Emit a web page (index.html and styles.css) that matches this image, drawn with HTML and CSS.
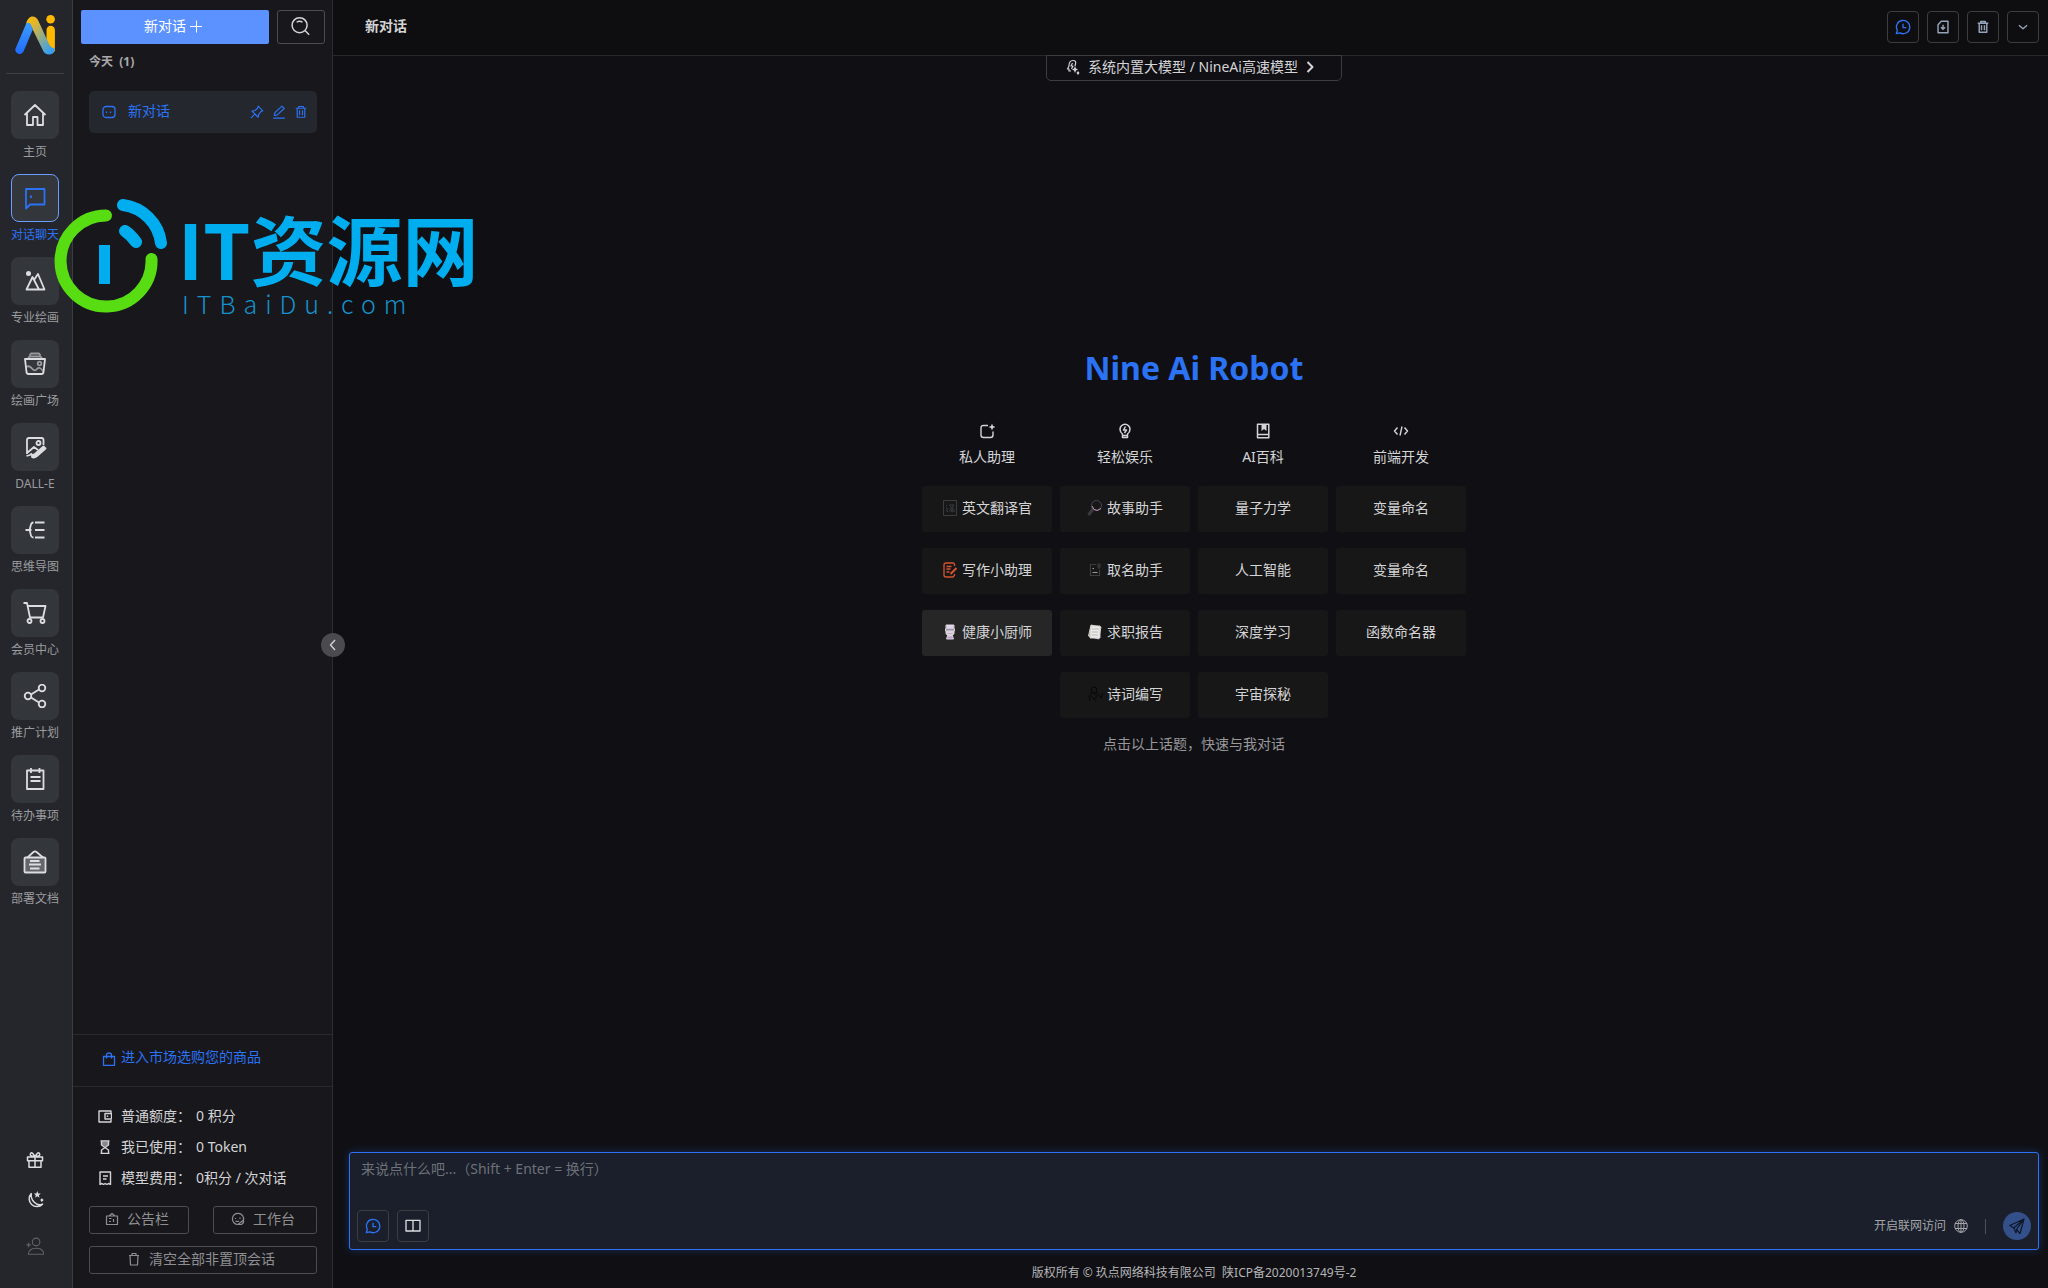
FILE: index.html
```html
<!DOCTYPE html>
<html lang="zh-CN">
<head>
<meta charset="utf-8">
<meta name="viewport" content="width=device-width, initial-scale=1">
<title>Nine Ai Robot</title>
<link rel="stylesheet" href="styles.css">
</head>
<body>
<svg class="sprite" aria-hidden="true">
  <symbol id="i-trash" viewBox="0 0 24 24"><path d="M3 5.500h18M8 5V2.500h8V5M5.500 5.500V21h13V5.500M9.500 9v8.500M14.500 9v8.500"/></symbol>
  <symbol id="i-chatclock" viewBox="0 0 24 24"><path d="M2 22l1.500-5A10 10 0 1 1 7.500 20.900zM12 7v6h5"/></symbol>
</svg>
<div class="app">
  <nav class="rail" aria-label="主导航">
    <svg class="logo" viewBox="0 0 40 40">
      <defs>
        <linearGradient id="lg1" x1="0" y1="0" x2="0" y2="1"><stop offset="0" stop-color="#3d9dfb"/><stop offset="1" stop-color="#1f6bff"/></linearGradient>
        <linearGradient id="lg2" x1="0" y1="0" x2=".8" y2="1"><stop offset="0" stop-color="#ffb703"/><stop offset=".25" stop-color="#e5b62a"/><stop offset="1" stop-color="#2f9ffc"/></linearGradient>
      </defs>
      <path d="M31.500 15a4.200 4.200 0 0 1 8.400 0v21l-3 3-5.400-8z" fill="#ffb900"/>
      <circle cx="35.600" cy="4.300" r="4.300" fill="#ffb900"/>
      <path d="M11 9c1-5 4-7.600 6.500-7.600S22 3 23 5l11 24c1 2.500 3 4 6 4.500C39 38 36.500 39.500 34 39.500s-5-1.500-6-4L16 11c-1-2.500-3-3-5-2z" fill="url(#lg2)"/>
      <path d="M11 9c1.500-2 4-1.500 5 1l2 4-9.500 22.500A4.300 4.300 0 0 1 .4 34z" fill="url(#lg1)"/>
    </svg>
    <hr class="rail-line">
    <div class="rail-list">
      <a class="rail-item" href="#home"><span class="tile"><svg viewBox="0 0 24 24"><path d="M1.500 12L12 2l10.500 10M4 10v12h6v-8h4.500v8H20V10"/></svg></span>主页</a>
      <a class="rail-item active" href="#chat" aria-current="page"><span class="tile"><svg viewBox="0 0 24 24"><path d="M3 22.500V3h18.500v15.500H7zM8 9.500v2.500"/></svg></span>对话聊天</a>
      <a class="rail-item" href="#draw"><span class="tile"><svg viewBox="0 0 24 24"><path d="M3.500 20.500l6-12.500 6.500 12.500zM11 11l4-6 6.500 15.500H16"/><circle cx="5.500" cy="4.500" r="2.500" fill="currentColor" stroke="none"/></svg></span>专业绘画</a>
      <a class="rail-item" href="#gallery"><span class="tile"><svg viewBox="0 0 24 24"><path d="M2 7h20l-1.500 13q-.3 2-2 2h-13q-1.700 0-2-2z"/><g opacity=".6"><path d="M5 6.500L6.500 4.500h11L19 6.500M6.500 3.500L8 1.500h8l1.500 2M3 15q3.500-2 6 1.500t5 .5 6 2"/><circle cx="16.500" cy="11.500" r="1.800"/></g></svg></span>绘画广场</a>
      <a class="rail-item" href="#dalle"><span class="tile"><svg viewBox="0 0 24 24"><path d="M20.500 10V5q0-2-2-2H6Q4 3 4 5v14M4 18l7-6 4 3M3.500 21l3.500-1 2-1.500"/><circle cx="15.500" cy="8" r="2"/><path d="M9 20l3-1 8.500-7.500 2 2L14 21q-3 2.500-5 1z" fill="currentColor"/></svg></span>DALL-E</a>
      <a class="rail-item" href="#mind"><span class="tile"><svg viewBox="0 0 24 24"><path d="M2.500 12h6M10.500 4.500Q8 4.500 7.500 8.500L6.500 12l1 3.500q.5 4 3 4M12 4.500h9.500M12 12h9.500M12 19.500h9.500"/></svg></span>思维导图</a>
      <a class="rail-item" href="#member"><span class="tile"><svg viewBox="0 0 24 24"><path d="M.5 2h3.500l3 14.500h13L22.500 5H5"/><circle cx="6.500" cy="20" r="2"/><circle cx="19.500" cy="20" r="2"/></svg></span>会员中心</a>
      <a class="rail-item" href="#promo"><span class="tile"><svg viewBox="0 0 24 24"><circle cx="5" cy="12" r="3.300"/><circle cx="19" cy="4" r="3.300"/><circle cx="19" cy="20" r="3.300"/><path d="M8 10.500l8-5M8 13.500l8 5"/></svg></span>推广计划</a>
      <a class="rail-item" href="#todo"><span class="tile"><svg viewBox="0 0 24 24"><path d="M4 3.500h16.500V22H4zM8 1v5M16.500 1v5M7.500 10h10M7.500 14h10"/></svg></span>待办事项</a>
      <a class="rail-item" href="#docs"><span class="tile"><svg viewBox="0 0 24 24"><path d="M4.500 7.500L10.500 2q1.500-1.200 3 0l6.500 5.500"/><rect x="1.500" y="7.500" width="21" height="15" rx="1" fill="#63666c"/><path d="M7 11h9.500M6 14.500h12M7 18.500h9.500"/></svg></span>部署文档</a>
    </div>
    <div class="rail-tools">
      <button aria-label="礼物"><svg viewBox="0 0 24 24" stroke-width="2"><path d="M2 8h20v5H2zM4 13v8.500h16V13M12 8v13.500M12 7.500Q4 7 6 3.500T12 7.500Q20 7 18 3.500T12 7.500"/></svg></button>
      <button aria-label="深色模式"><svg viewBox="0 0 24 24" stroke-width="2"><path d="M7 3.500A10 10 0 1 0 22 17.500Q16 20 11 15T7 3.500z"/><path d="M15 0l1.300 3.200 3.400.2-2.600 2.200.9 3.300-3-1.800-2.800 1.800.8-3.300-2.500-2.200 3.300-.2zM21 9.500l2.500 2.500-2.500 2.500-2-2.500z" fill="currentColor" stroke="none"/></svg></button>
      <button class="dim" aria-label="账户"><svg viewBox="0 0 24 24" stroke-width="1.500"><circle cx="13.500" cy="6.500" r="5"/><path d="M3 23q1-8 10.500-8T24 23zM.5 10.500h6M3.500 7.500v6"/></svg></button>
    </div>
  </nav>

  <aside class="side">
    <div class="side-top">
      <button class="new-chat">新对话<svg viewBox="0 0 14 14" stroke-width="1"><path d="M1 7.500h12M7.500 1.500v12"/></svg></button>
      <button class="search" aria-label="搜索"><svg viewBox="0 0 24 24"><circle cx="11.500" cy="11" r="9"/><path d="M18 17.500l5 5M8 7.500q3.500-2.500 7 0"/></svg></button>
    </div>
    <div class="history">
      <h2>今天&nbsp; (1)</h2>
      <div class="chat-row">
        <svg viewBox="0 0 14 14" stroke-width="1.300"><rect x="1" y="1.500" width="12" height="11" rx="3"/><path d="M4.500 6.500v1.500M8.500 6.500v1.500"/></svg>
        <a href="#c1">新对话</a>
        <button aria-label="置顶"><svg viewBox="0 0 24 24" stroke-width="2"><path d="M14 2l8 8-3 1-4 5-1 5L3.500 10.500l5-1 4.500-4zM8 16l-6.500 6.500"/></svg></button>
        <button aria-label="编辑"><svg viewBox="0 0 24 24" stroke-width="2"><path d="M4 18l1-5L17 2l4 4L9 17zM2 22.500h20"/></svg></button>
        <button aria-label="删除"><svg viewBox="0 0 24 24" stroke-width="2"><use href="#i-trash"/></svg></button>
      </div>
    </div>
    <a class="market" href="#market"><svg viewBox="0 0 14 14" stroke-width="1.300"><path d="M1.500 4.500h11v9h-11zM4.500 6.500V3q0-2 2.500-2t2.500 2v3.500"/></svg>进入市场选购您的商品</a>
    <div class="account">
      <dl>
        <div><svg viewBox="0 0 14 14" stroke-width="1.400"><path d="M13 4V2H1v11h12v-2M7 4.500h6.500v5.500H7zM9.500 6.500v1.500"/></svg><dt>普通额度：</dt><dd>0 积分</dd></div>
        <div><svg viewBox="0 0 14 14" stroke-width="1.400"><path d="M2.500 1h9M2.500 13.500h9M3.500 1.500V5L7 7.500 10.500 5V1.500M3.500 13v-3L7 7.500l3.500 2.500v3"/><path d="M4 2h6v3L7 6.500 4 5z" fill="currentColor" opacity=".6" stroke="none"/></svg><dt>我已使用：</dt><dd>0 Token</dd></div>
        <div><svg viewBox="0 0 14 14" stroke-width="1.400"><path d="M2 1h10.500v12.500l-2-1-1.700 1-1.600-1-1.700 1-1.500-1-2 1zM5 5h5M5 8h3.500"/></svg><dt>模型费用：</dt><dd>0积分 / 次对话</dd></div>
      </dl>
      <div class="pair">
        <button><svg viewBox="0 0 14 14" stroke-width="1.200"><path d="M1.500 4h11v8.500h-11zM4 4l3-2.500L10 4M4 6.500h2.500M8.500 7v3M4 9.500h2"/></svg>公告栏</button>
        <button><svg viewBox="0 0 14 14" stroke-width="1.200"><path d="M12.500 8A5.600 5.600 0 1 0 7 12.500M4.500 6v1M9 5.500v1.500M4.500 9q2 1 3.500 0M7 12.500l5.500-4.500v2.500l-2 2z"/></svg>工作台</button>
      </div>
      <button><svg viewBox="0 0 14 14" stroke-width="1.200"><path d="M2 3.500h10M5 3.500v-2h4v2M3 3.500l.5 9.500h7l.5-9.500"/></svg>清空全部非置顶会话</button>
    </div>
    <button class="collapse" aria-label="收起"><svg viewBox="0 0 14 14" stroke-width="1.400"><path d="M9 2L4.500 7 9 12"/></svg></button>
  </aside>

  <main class="main">
    <header class="top">
      <h1>新对话</h1>
      <button class="box blue" aria-label="上下文"><svg viewBox="0 0 24 24" stroke-width="2"><use href="#i-chatclock"/></svg></button>
      <button class="box small" aria-label="导出"><svg viewBox="0 0 24 24" stroke-width="2.500"><path d="M9 2h11.500v20H3.500V8zM12 8v7M8.500 12.500l3.500 3.500 3.500-3.500"/></svg></button>
      <button class="box small" aria-label="清空"><svg viewBox="0 0 24 24" stroke-width="2.500"><use href="#i-trash"/></svg></button>
      <button class="box small" aria-label="更多"><svg viewBox="0 0 24 24" stroke-width="2.500"><path d="M5 9l7 6 7-6"/></svg></button>
    </header>
    <div class="content">
      <button class="model"><svg viewBox="0 0 14 16" stroke-width="1.200"><path d="M5 12H3v-2H1.500L3 7q0-5.500 4-5.500 3.500 0 2.500 3.500L9 7M6.500 4L5 7h2L5.500 10"/><path d="M9 7l1 2.500 2 1-2 1L9 14l-1-2.500-2-1 2-1zM12 12l1.500 2L12 16l-1.500-2z" fill="currentColor" stroke="none"/></svg>系统内置大模型 / NineAi高速模型<svg viewBox="0 0 14 16" stroke-width="2"><path d="M4.500 3l5 5-5 5"/></svg></button>

      <section class="hero">
        <h2>Nine Ai Robot</h2>
        <div class="topics">
          <div class="topic">
            <h3><svg viewBox="0 0 16 16" stroke-width="1.400"><path d="M9 2.500H4.500Q2 2.500 2 5v7q0 2.500 2.500 2.500h7Q14 14.500 14 12V8.500"/><path d="M13 .5l1 2.500 2.500 1-2.500 1-1 2.500-1-2.500-2.500-1 2.500-1z" fill="currentColor" stroke="none"/></svg>私人助理</h3>
            <button><svg class="g-tr" viewBox="0 0 16 16" stroke-width="1"><path d="M1.500.5h13v15h-13zM4 5l1 1M4 8h1v4l1-1M7 5h5l-2 3-2-2M7.500 9h5M10 7.500v5M7 11h6"/></svg>英文翻译官</button>
            <button><svg class="g-wr" viewBox="0 0 16 16" stroke-width="1.300"><path d="M12.500 4V2.500Q12.500 1 11 1H4Q2 1 2 3v10q0 2 2 2h7l1.500-1.500V12M4.500 4.500h5M4.500 7h4M4.500 10h3"/><path d="M14.500 6L8.500 12" stroke-width="2"/></svg>写作小助理</button>
            <button class="hover"><svg viewBox="0 0 16 16" stroke="none"><path d="M4 1h8v4H4z" fill="#bfa3cf"/><path d="M6 1v3M8 1v3M10 1v3" stroke="#fff"/><path d="M3.500 5h9v2h-9z" fill="#5f5678"/><path d="M4 7h8v2.500L10 12H6L4 9.500z" fill="#e9d3e5"/><path d="M5 9h6v1H5z" fill="#7a4f86"/><path d="M5.500 12h5l1 3h-7z" fill="#c79bd8"/></svg>健康小厨师</button>
          </div>
          <div class="topic">
            <h3><svg viewBox="0 0 16 16" stroke-width="1.500"><path d="M5.500 11Q3 9 3 6.200a5 5 0 0 1 10 0Q13 9 10.500 11v3.500h-5zM5.500 12.500h5M8.500 3.500L6.500 7h3L7.500 10"/></svg>轻松娱乐</h3>
            <button><svg viewBox="0 0 16 16"><path d="M6 9l-4.500 6" stroke="#3d3942" stroke-width="3"/><circle cx="9.500" cy="5.500" r="5" stroke="#4b4453"/><path d="M5 6q1 4 5 4.500l4-2" stroke="#b79cb4"/></svg>故事助手</button>
            <button><svg class="g-tr" viewBox="0 0 16 16" stroke-width="1.200"><path d="M9 2.500H3.500v11h9V8M11 2h2v3h-2zM12 5v2"/><path d="M5.500 6.500H7M5.500 10.500h5" stroke="#999"/></svg>取名助手</button>
            <button><svg viewBox="0 0 16 16" stroke="none"><path d="M4 1l10 2-2.500 12L1.500 12z" fill="#aeb46c"/><path d="M4 2h9v12H3z" fill="#ece9e6"/><path d="M5 5h7M5 8h6M4.500 11H11" stroke="#bbb"/></svg>求职报告</button>
            <button><svg class="g-po" viewBox="0 0 16 16" stroke-width="1"><circle cx="7" cy="4" r="3"/><path d="M5 7l-3 3 1 5M7 7l3 3-3 4M9 6l5 6 2-5M4 10l5 5"/></svg>诗词编写</button>
          </div>
          <div class="topic">
            <h3><svg viewBox="0 0 16 16" stroke-width="1.500"><path d="M2.500 1.200h11.300v13.600H2.500zM3 11.500h10.500"/><path d="M6.500 1h5v7L9 6 6.500 8z" fill="currentColor" stroke="none"/></svg>AI百科</h3>
            <button>量子力学</button>
            <button>人工智能</button>
            <button>深度学习</button>
            <button>宇宙探秘</button>
          </div>
          <div class="topic">
            <h3><svg viewBox="0 0 16 16" stroke-width="1.400"><path d="M4.500 4.500L1.500 8l3 3.500M11.500 4.500l3 3.500-3 3.500M9 3.500L7 12.500"/></svg>前端开发</h3>
            <button>变量命名</button>
            <button>变量命名</button>
            <button>函数命名器</button>
          </div>
        </div>
        <p>点击以上话题，快速与我对话</p>
      </section>

      <form class="composer">
        <textarea aria-label="消息" placeholder="来说点什么吧...（Shift + Enter = 换行）"></textarea>
        <div class="bar">
          <button type="button" class="box blue" aria-label="上下文"><svg viewBox="0 0 24 24" stroke-width="2"><use href="#i-chatclock"/></svg></button>
          <button type="button" class="box light" aria-label="提示词"><svg viewBox="0 0 24 24" stroke-width="2"><path d="M1.500 3.500h21v16h-21zM12 3.500v17"/></svg></button>
          <button type="button" class="web">开启联网访问<svg viewBox="0 0 14 14" stroke-width="1"><circle cx="7" cy="7" r="6.300"/><ellipse cx="7" cy="7" rx="3" ry="6.300"/><path d="M1 4.500h12M1 9.500h12M7 1v12"/></svg></button>
          <span class="sep"></span>
          <button class="send" aria-label="发送"><svg viewBox="0 0 16 16" stroke-width="1.200"><path d="M15 1L.8 7.500l4 2.500L15 1l-4 14.500-3.500-4M4.800 10L15 1 7.500 11.500 7 15 4.800 10"/></svg></button>
        </div>
      </form>
      <footer>版权所有 © 玖点网络科技有限公司&nbsp; <a href="#icp">陕ICP备2020013749号-2</a></footer>
    </div>
  </main>

  <div class="watermark">
    <svg viewBox="0 0 118 118" stroke-width="12">
      <path d="M54 18.500A45.500 45.500 0 1 0 99.500 62" stroke="#58dd13"/>
      <path d="M71 8A44 44 0 0 1 109 46M73 34Q79 38 84 45" stroke="#00adee"/>
      <path d="M47 48h11v39H47z" fill="#00adee" stroke="none"/>
    </svg>
    <div class="wm-text"><strong>IT资源网</strong><span>ITBaiDu.com</span></div>
  </div>
</div>
</body>
</html>
```
FILE: styles.css
```css
* { box-sizing: border-box; }
body {
  margin: 0;
  background: #101014;
  color: #d4d4d6;
  font: 14px/20px "Noto Sans", "Noto Sans CJK SC", sans-serif;
}
h1, h2, h3, p, dl, dd { margin: 0; }
button {
  padding: 0;
  border: 0;
  background: none;
  color: inherit;
  font: inherit;
  cursor: pointer;
}
a { color: inherit; text-decoration: none; }
svg {
  flex: none;
  fill: none;
  stroke: currentColor;
  stroke-linejoin: round;
}
.sprite { display: none; }

.app {
  position: relative;
  display: flex;
  height: 100vh;
}

/* icon rail */
.rail {
  flex: none;
  display: flex;
  flex-direction: column;
  align-items: center;
  width: 73px;
  padding: 15px 2px 0 0;
  background: #25262b;
  border-right: 1px solid #3c3c40;
}
.logo { width: 40px; height: 40px; stroke: none; }
.rail-line {
  width: 58px;
  margin: 18px 0 17px;
  border: 0;
  border-top: 1px solid #3f4044;
}
.rail-list {
  display: flex;
  flex-direction: column;
  gap: 11px;
}
.rail-item {
  display: flex;
  flex-direction: column;
  align-items: center;
  gap: 2px;
  color: #9b9c9f;
  font-size: 12px;
  line-height: 22px;
  white-space: nowrap;
}
.tile {
  display: grid;
  place-items: center;
  width: 48px;
  height: 48px;
  border: 1px solid transparent;
  border-radius: 8px;
  background: #33363b;
  color: #dcdde0;
}
.tile svg { width: 24px; height: 24px; stroke-width: 1.8; }
.active { color: #2b72f5; }
.active .tile { border-color: #6b9dff; color: #2b72f5; }
.rail-tools {
  display: flex;
  flex-direction: column;
  gap: 22px;
  margin: auto 0 33px;
}
.rail-tools button { display: block; height: 18px; color: #dcdde0; }
.rail-tools svg { display: block; width: 18px; height: 18px; }
.rail-tools .dim { margin-top: 6px; color: #616266; }

/* conversations */
.side {
  position: relative;
  flex: none;
  display: flex;
  flex-direction: column;
  width: 260px;
  background: #18181c;
  border-right: 1px solid #2d2d30;
}
.side-top { display: flex; gap: 8px; padding: 10px 7px 7px 8px; }
.new-chat {
  flex: 1;
  display: flex;
  align-items: center;
  justify-content: center;
  gap: 3px;
  height: 34px;
  padding: 0 3px 2px 0;
  border-radius: 2px;
  background: #5b92ff;
  color: #fff;
}
.new-chat svg { width: 14px; height: 14px; }
.search {
  display: grid;
  place-items: center;
  width: 48px;
  padding: 0 2px 2px 0;
  border: 1px solid #4d4d50;
  border-radius: 3px;
}
.search svg { width: 20px; height: 20px; stroke-width: 1.8; }
.history { flex: 1; padding: 0 15px 0 16px; }
.history h2 { color: #a9a9ac; font-size: 12px; line-height: 22px; }
.chat-row {
  display: flex;
  align-items: center;
  gap: 8px;
  height: 42px;
  margin-top: 18px;
  padding: 0 9px 0 13px;
  border-radius: 5px;
  background: #24272e;
  color: #2b72f5;
}
.chat-row > svg { width: 14px; height: 14px; }
.chat-row a { flex: 1; margin-left: 4px; padding-bottom: 2px; }
.chat-row button { height: 14px; }
.chat-row button svg { display: block; width: 14px; height: 14px; }
.market {
  display: flex;
  align-items: center;
  gap: 5px;
  height: 52px;
  padding: 0 29px 7px;
  border-top: 1px solid #2a2a2d;
  color: #2b72f5;
}
.market svg { width: 14px; height: 14px; margin-top: 4px; }
.account {
  display: flex;
  flex-direction: column;
  gap: 12px;
  padding: 13px 15px 14px 16px;
  border-top: 1px solid #2a2a2d;
}
.account dl { padding-bottom: 1px; }
.account dl div {
  display: flex;
  align-items: center;
  height: 31px;
  padding-left: 9px;
}
.account dl svg { width: 14px; height: 14px; margin-right: 9px; }
.account dt { width: 75px; white-space: nowrap; }
.account button {
  display: flex;
  align-items: center;
  justify-content: center;
  gap: 8px;
  height: 28px;
  padding: 0 4px 2px 0;
  border: 1px solid #4d4d50;
  border-radius: 3px;
  color: #8f8f92;
}
.account button svg { width: 14px; height: 14px; }
.pair { display: grid; grid-template-columns: 100px 1fr; gap: 24px; }
.collapse {
  position: absolute;
  z-index: 2;
  top: 50%;
  right: -13px;
  display: grid;
  place-items: center;
  width: 24px;
  height: 24px;
  margin-top: -11px;
  border-radius: 50%;
  background: #4a4a4f;
}
.collapse svg { width: 14px; height: 14px; }

/* conversation area */
.main { flex: 1; display: flex; flex-direction: column; min-width: 0; }
.top {
  display: flex;
  align-items: center;
  gap: 8px;
  height: 56px;
  padding: 0 9px 1px 32px;
  background: #0e0e10;
  border-bottom: 1px solid #29292c;
}
.top h1 { flex: 1; padding-bottom: 2px; font-size: 14px; }
.box {
  display: grid;
  place-items: center;
  width: 32px;
  height: 32px;
  border: 1px solid #3d3d3f;
  border-radius: 4px;
}
.box svg { width: 16px; height: 16px; }
.blue { color: #2b72f5; }
.small { color: #94a3b8; }
.small svg { width: 14px; height: 14px; }
.light { color: #dcdde0; }
.content {
  flex: 1;
  display: flex;
  flex-direction: column;
  padding: 0 9px 0 16px;
}
.model {
  align-self: center;
  display: flex;
  align-items: center;
  gap: 8px;
  height: 26px;
  margin-top: -1px;
  padding: 0 24px 2px 19px;
  border: 1px solid #3d3d3f;
  border-radius: 0 0 5px 5px;
}
.model svg { width: 14px; height: 16px; }
.model svg:last-child { margin-left: -3px; }

.hero {
  flex: 1;
  display: flex;
  flex-direction: column;
  align-items: center;
  padding-top: 267px;
}
.hero h2 { color: #2b72f5; font-size: 32px; line-height: 40px; }
.topics {
  display: grid;
  grid-template-columns: repeat(4, 1fr);
  gap: 8px;
  width: 544px;
  margin-top: 33px;
}
.topic { display: flex; flex-direction: column; gap: 16px; }
.topic h3 {
  display: flex;
  flex-direction: column;
  align-items: center;
  gap: 8px;
  padding: 2px 0 3px;
  font-size: 14px;
  font-weight: 400;
}
.topic h3 svg { width: 16px; height: 16px; }
.topic button {
  display: flex;
  align-items: center;
  justify-content: center;
  gap: 4px;
  height: 46px;
  padding-bottom: 2px;
  border-radius: 3px;
  background: #171717;
}
.topic button svg { width: 16px; height: 16px; }
.topic .hover { background: #262626; }
.g-tr { color: #3b3d40; }
.g-wr { color: #d9532f; }
.g-po { color: #060606; }
.hero p { margin-top: 16px; color: #98989b; }

.composer {
  padding: 6px 7px 7px;
  border: 1px solid #2b72f5;
  border-radius: 3px;
  background: #1a1f2b;
  box-shadow: 0 0 8px #2b72f54d;
}
.composer textarea {
  display: block;
  width: 100%;
  height: 51px;
  padding: 0 4px;
  border: 0;
  outline: 0;
  resize: none;
  background: none;
  color: #d4d4d6;
  font: inherit;
}
.composer textarea::placeholder { color: #6e7178; }
.bar { display: flex; align-items: center; gap: 8px; }
.web {
  display: flex;
  align-items: center;
  gap: 8px;
  margin-left: auto;
  color: #a3a5a8;
  font-size: 12px;
}
.web svg { width: 14px; height: 14px; }
.sep { width: 1px; height: 15px; margin: 0 9px; background: #4c4f56; }
.send {
  display: grid;
  place-items: center;
  width: 28px;
  height: 28px;
  border-radius: 50%;
  background: #34508b;
  color: #0f1728;
}
.send svg { width: 16px; height: 16px; }
footer {
  height: 38px;
  padding-top: 13px;
  color: #b5b5b7;
  font-size: 12px;
  text-align: center;
}

/* site stamp lying over the page */
.watermark {
  position: absolute;
  z-index: 3;
  top: 197px;
  left: 52px;
  display: flex;
  gap: 8px;
  color: #00adee;
  pointer-events: none;
}
.watermark svg { width: 118px; height: 118px; stroke-linecap: round; }
.wm-text { display: flex; flex-direction: column; padding-top: 14px; }
.wm-text strong {
  font: 700 76px/72px "Noto Sans CJK SC", sans-serif;
}
.wm-text span {
  margin: 4px 0 0 4px;
  color: #1592cc;
  font: 300 25px/32px "Noto Sans CJK SC", sans-serif;
  letter-spacing: 8px;
}
```
